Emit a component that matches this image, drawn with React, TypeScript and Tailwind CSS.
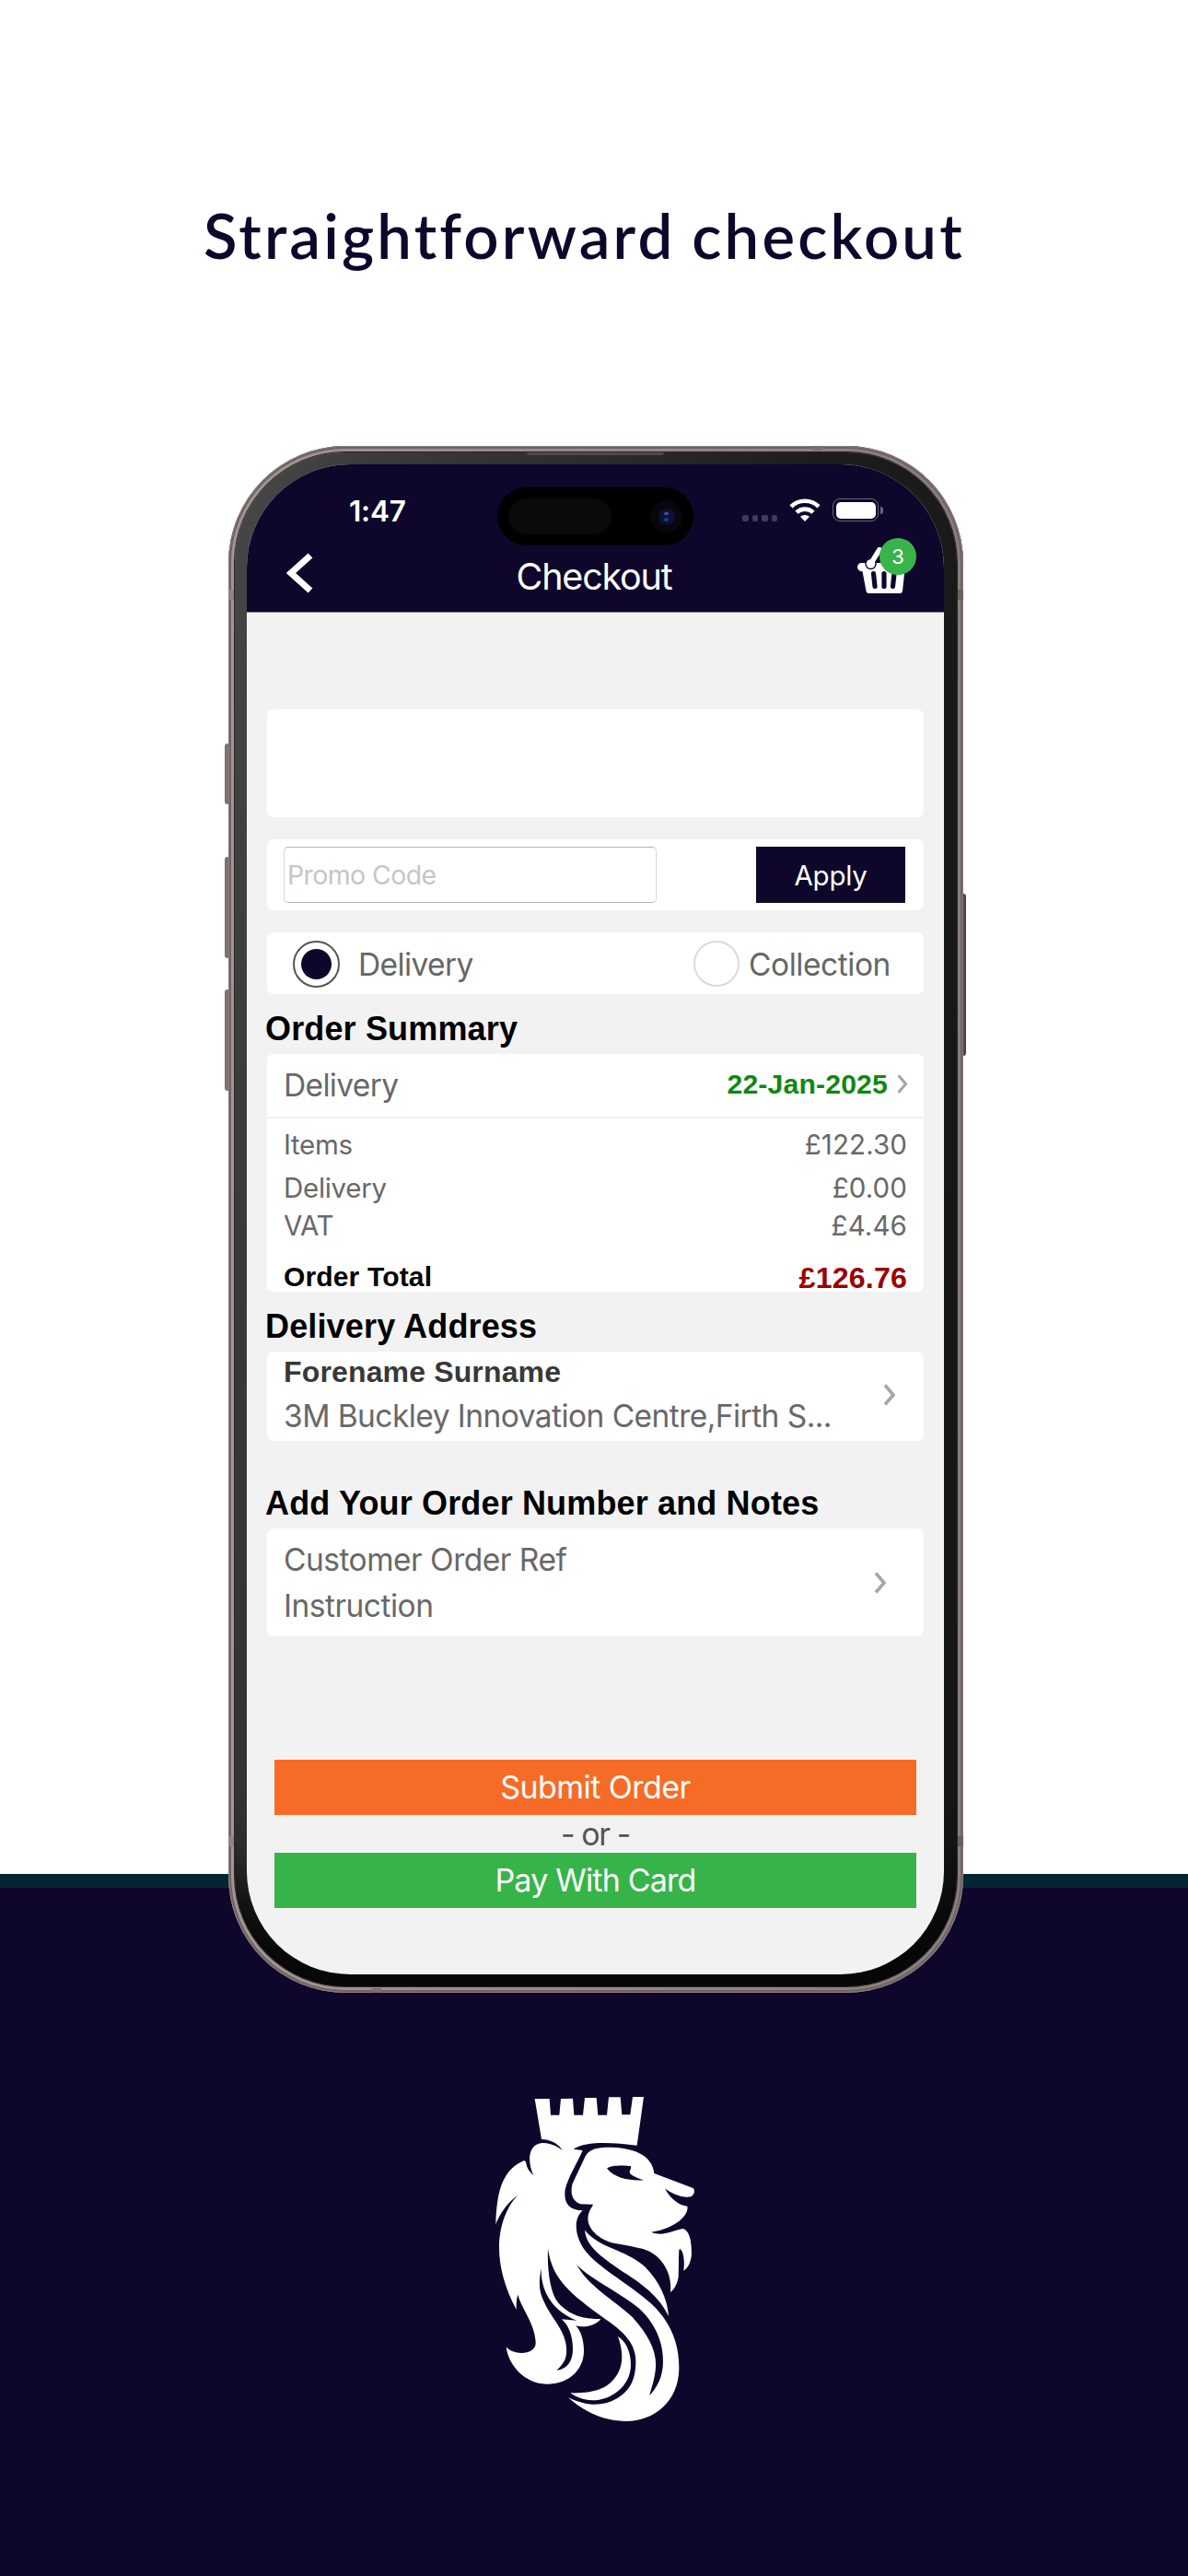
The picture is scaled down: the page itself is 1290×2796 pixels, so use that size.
import React from "react";

const inter = "font-['Inter',sans-serif]";
const arial = "font-['Liberation_Sans',sans-serif] font-bold tracking-[0.15px]";

const Lion = () => (
  <svg width="250" height="380" viewBox="0 0 750 1140" aria-hidden="true">
    {/* Crown and mane */}
    <path
      fill="#fff"
      d="M182 54L230 54L234 107L262 107L267 54L306 53L310 107L339 107L345 51L383 51L388 107L417 107L423 49L461 49L466 106L493 106L501 48L537 48L515 206C440 197 350 190 308 218L338 222C320 265 290 310 281 350C275 395 295 418 338 418C308 445 312 495 340 540C380 600 480 650 560 720C625 780 652 850 652 930C652 1040 570 1104 480 1104C400 1103 340 1070 291 1027C350 1055 400 1058 450 1030C495 1003 511 965 511 910C511 850 470 810 410 770C300 690 240 645 225 543C222 610 232 685 258 718C300 765 350 772 397 771C385 790 345 802 316 793C332 810 342 840 342 875C342 930 300 983 220 983C150 983 95 920 89 862C110 890 185 890 185 850C185 815 168 780 155 755C142 730 132 710 127 692C122 705 122 720 122 740C84 670 66 600 66 540C66 470 90 405 128 367C95 390 67 430 55 463C58 370 70 290 143 257C150 254 153 256 154 265C156 280 165 293 178 304C160 265 155 205 205 198C230 196 255 208 272 222C262 203 235 186 204 186Z"
    />
    {/* Face and beard */}
    <path
      fill="#fff"
      d="M372 398L330 397C300 385 298 355 305 330L345 245C355 225 370 213 420 212C500 212 565 235 571 297L698 345C705 352 702 368 690 373C665 378 630 365 606 346C620 375 650 402 679 404C685 430 645 475 562 488C600 505 640 480 665 477C690 485 693 530 693 560C690 590 680 605 667 614C672 580 665 545 654 543C650 545 652 580 650 635C645 660 635 675 624 684C632 620 590 550 520 540C490 532 460 528 430 522C380 505 350 470 356 435C360 415 367 410 372 398Z"
    />
    <path
      fill="#fff"
      d="M345 482C400 545 470 540 540 600C590 650 615 710 618 762C590 700 530 655 470 618C410 575 350 540 345 482Z"
    />
    <path
      fill="#fff"
      d="M453 828C480 845 495 880 495 920C495 990 430 1036 370 1036C340 1035 315 1025 298 1012C380 1014 420 995 445 960C475 920 468 870 453 828Z"
    />
    {/* Eye and hair lines */}
    <path
      fill="#0e072b"
      d="M417 280C435 268 480 271 495 273C498 285 485 290 495 300C505 308 525 315 537 319C500 322 440 315 417 280Z"
    />
    <path
      fill="#0e072b"
      d="M318 592C345 630 450 680 520 735C570 780 600 840 600 910C600 960 580 995 556 1020C560 1000 573 970 576 930C580 880 555 825 500 765C440 710 350 660 318 592Z"
    />
    <path
      fill="#0e072b"
      d="M203 605C195 650 195 680 210 710C240 780 290 810 285 885C282 910 268 925 253 938C290 935 306 905 306 870C306 830 295 795 270 772L319 776C250 750 200 690 203 605Z"
    />
  </svg>
);

const Basket = () => (
  <svg width="54" height="51" viewBox="0 0 54 51" fill="none" aria-hidden="true">
    <path
      d="M0 21.500a4.500 4.500 0 0 1 4.500-4.500h43a4.500 4.500 0 0 1 4 7L49 47.500a3 3 0 0 1-3 2.500H12.500a3 3 0 0 1-3-2.500L5.500 26A4.500 4.500 0 0 1 0 21.500Z"
      fill="#fff"
    />
    <path d="M17.500 28.500l1.500 14M29 28.500v14M40 28.500l-1.500 14" stroke="#0e072b" strokeWidth="5.200" strokeLinecap="round" />
    <circle cx="14.500" cy="18" r="6.200" fill="#0e072b" />
    <path d="M14.500 18L24 2.500" stroke="#fff" strokeWidth="5.500" strokeLinecap="round" />
    <circle cx="14.500" cy="18" r="4.800" fill="#fff" />
  </svg>
);

const Wifi = () => (
  <svg width="34" height="25" viewBox="0 0 34 25" aria-hidden="true">
    <path d="M17 25l-5-5.200a7.600 7.600 0 0 1 10 0Z" fill="#fff" />
    <path d="M8 15.200a13 13 0 0 1 18 0M2 8.800a21.500 21.500 0 0 1 30 0" stroke="#fff" strokeWidth="4.600" fill="none" />
  </svg>
);

const Chevron = ({ className = "" }: { className?: string }) => (
  <svg viewBox="0 0 14 24" className={className} fill="none" aria-hidden="true">
    <path d="M2 1.500L11 12L2 22.500" stroke="#a6a6a6" strokeWidth="3.600" />
  </svg>
);

const StatusBar = () => (
  <div className="flex h-[88px] items-start pt-[25px]">
    <div className={`${inter} ml-[111px] mt-[10px] w-[161px] text-[31.500px] leading-[32px] font-semibold tracking-[-0.2px] text-white`}>
      1:47
    </div>
    <div className="flex h-[63px] w-[213px] items-center justify-between rounded-full bg-black pr-[12px] pl-[12px]">
      <div className="h-[39px] w-[112px] rounded-full bg-[#0a0a0a]" />
      <div className="flex h-[35px] w-[35px] items-center justify-center rounded-full bg-[#08060c]">
        <div className="flex h-[18px] w-[18px] flex-col items-center justify-center gap-[3px] rounded-full bg-[#0c1034]">
          <div className="h-[3px] w-[5px] rounded-full bg-[#4a4ca8]" />
          <div className="h-[4px] w-[5px] rounded-full bg-[#10428a]" />
        </div>
      </div>
    </div>
    <div className="mt-[30px] ml-[53px] flex gap-[4px]">
      <span className="h-[7px] w-[6.500px] rounded-[2px] bg-[#413b5a]" />
      <span className="h-[7px] w-[6.500px] rounded-[2px] bg-[#413b5a]" />
      <span className="h-[7px] w-[6.500px] rounded-[2px] bg-[#413b5a]" />
      <span className="h-[7px] w-[6.500px] rounded-[2px] bg-[#413b5a]" />
    </div>
    <div className="mt-[12px] ml-[13px]">
      <Wifi />
    </div>
    <div className="mt-[12px] ml-[13px] flex items-center gap-[2px]">
      <div className="h-[25px] w-[50px] rounded-[8px] border-[1.500px] border-[#6a6580] p-[2.500px]">
        <div className="h-full w-full rounded-[5px] bg-white" />
      </div>
      <div className="h-[8px] w-[3px] rounded-r-full bg-[#6a6580]" />
    </div>
  </div>
);

const Header = () => (
  <header className="h-[161px] border-b border-[#807c92] bg-[#0e072b]">
    <StatusBar />
    <div className="flex h-[72px] items-start justify-between pl-[43px] pr-[30px]">
      <svg width="30" height="44" viewBox="0 0 30 44" fill="none" className="mt-[8px]" aria-hidden="true">
        <path d="M26 3L5 22L26 41" stroke="#fff" strokeWidth="7" />
      </svg>
      <h2 className={`${inter} mt-[12px] ml-[18px] text-[39.500px] leading-[44px] tracking-[-1.2px] text-white`}>
        Checkout
      </h2>
      <div className="relative -mt-[8px] h-[60px] w-[64px] pt-[10px]">
        <Basket />
        <div className={`${inter} absolute top-0 right-0 flex h-[40px] w-[40px] items-center justify-center rounded-full bg-[#38b44a] text-[22px] text-white`}>
          3
        </div>
      </div>
    </div>
  </header>
);

const SummaryRow = ({ label, value, className }: { label: string; value: string; className: string }) => (
  <div className={`${inter} ${className} flex items-center justify-between text-[29.500px] text-[#686868]`}>
    <span className="tracking-[-0.3px]">{label}</span>
    <span className="tracking-[0.1px]">{value}</span>
  </div>
);

const CheckoutBody = () => (
  <div className="flex flex-1 flex-col pl-[22px] pr-[22px] pt-[105px]">
    <div className="h-[117px] rounded-[7px] bg-white" />

    <div className="mt-[24px] flex h-[77px] items-center justify-between rounded-[7px] bg-white pl-[18px] pr-[20px]">
      <div className={`${inter} flex h-[61px] w-[405px] items-center rounded-[5px] border border-x-[#d8d8d8] border-y-[#b4b4b4] pt-[2px] pl-[3px] text-[28.500px] tracking-[-0.6px] text-[#c6c6c6]`}>
        Promo Code
      </div>
      <button className={`${inter} h-[61px] w-[162px] bg-[#0e072b] pt-[1px] text-[29.500px] tracking-[-0.3px] text-white`}>
        Apply
      </button>
    </div>

    <div className={`${inter} mt-[24px] flex h-[67px] items-center rounded-[7px] bg-white pl-[28px] text-[33.500px] tracking-[-0.6px] text-[#666]`}>
      <span className="mt-px flex h-[51px] w-[51px] items-center justify-center rounded-full border-2 border-[#555]">
        <span className="h-[33px] w-[33px] rounded-full bg-[#0e072b]" />
      </span>
      <span className="ml-[20px] w-[364px] pt-[3px]">Delivery</span>
      <span className="mt-px h-[50px] w-[50px] rounded-full border-2 border-[#dcdad2]" />
      <span className="ml-[10px] pt-[3px] tracking-[-0.45px]">Collection</span>
    </div>

    <h3 className={`${arial} -ml-[2px] h-[65px] pt-[18px] text-[36px] leading-[40px] text-black`}>
      Order Summary
    </h3>
    <section className="h-[258px] rounded-[7px] bg-white">
      <div className="flex h-[70px] items-center justify-between border-b-2 border-[#f0f0f0] pl-[18px] pr-[16px]">
        <span className={`${inter} text-[33.500px] tracking-[-0.65px] text-[#686868]`}>Delivery</span>
        <span className={`${arial} -mt-[3px] flex items-center gap-[9px] text-[30.200px] text-[#128712]`}>
          22-Jan-2025
          <Chevron className="h-[21px] w-[14px]" />
        </span>
      </div>
      <div className="pl-[18px] pr-[18px]">
        <SummaryRow label="Items" value="£122.30" className="h-[57px]" />
        <SummaryRow label="Delivery" value="£0.00" className="h-[37px]" />
        <SummaryRow label="VAT" value="£4.46" className="h-[44px]" />
        <div className={`${arial} flex h-[50px] items-end justify-between`}>
          <span className="text-[30px] leading-[32px] text-black">Order Total</span>
          <span className="text-[32.200px] leading-[30px] text-[#9c0000]">£126.76</span>
        </div>
      </div>
    </section>

    <h3 className={`${arial} -ml-[2px] h-[65px] pt-[18px] text-[36px] leading-[40px] text-black`}>
      Delivery Address
    </h3>
    <section className="flex h-[97px] items-center justify-between rounded-[7px] bg-white pl-[18px] pr-[30px]">
      <div className="-mt-[6px]">
        <div className={`${arial} text-[32px] leading-[48px] text-[#383838]`}>Forename Surname</div>
        <div className={`${inter} text-[33.500px] leading-[48px] tracking-[-0.55px] text-[#686868]`}>
          3M Buckley Innovation Centre,Firth S...
        </div>
      </div>
      <Chevron className="-mt-[3px] h-[24px] w-[14px]" />
    </section>

    <h3 className={`${arial} -ml-[2px] h-[95px] pt-[48px] text-[36px] leading-[40px] text-black`}>
      Add Your Order Number and Notes
    </h3>
    <section className="flex h-[117px] items-center justify-between rounded-[7px] bg-white pl-[18px] pr-[40px]">
      <div className={`${inter} text-[33.500px] leading-[50px] tracking-[-0.5px] text-[#686868]`}>
        <div>Customer Order Ref</div>
        <div>Instruction</div>
      </div>
      <Chevron className="h-[24px] w-[14px]" />
    </section>

    <div className={`${inter} mx-[8px] mt-[134px] flex flex-col text-center text-[34px] leading-[60px]`}>
      <button className="h-[60px] bg-[#f66c26] tracking-[-0.55px] text-white">Submit Order</button>
      <div className="h-[41px] leading-[41px] tracking-[-1.4px] text-[#555]">- or -</div>
      <button className="h-[60px] bg-[#36b44a] tracking-[-0.8px] text-white">Pay With Card</button>
    </div>
  </div>
);

const Phone = () => (
  <div className="relative ml-[248px] h-[1679px] w-[798px]">
    {/* Side buttons */}
    <div className="absolute top-[323px] -left-[4px] h-[66px] w-[6px] rounded-[3px] bg-[#7d7171]" />
    <div className="absolute top-[446px] -left-[4px] h-[110px] w-[6px] rounded-[3px] bg-[#7d7171]" />
    <div className="absolute top-[590px] -left-[4px] h-[110px] w-[6px] rounded-[3px] bg-[#7d7171]" />
    <div className="absolute top-[486px] -right-[3px] h-[176px] w-[6px] rounded-[3px] bg-[#4c4344]" />

    <div className="relative h-full rounded-[127px] bg-[linear-gradient(90deg,#a39594,#8a7e7d)] p-[7px] shadow-[inset_0_0_0_1px_#8b7f7e,inset_0_0_0_3px_#6e6363]">
      <div className="h-full rounded-[120px] bg-[linear-gradient(100deg,#484848_0%,#3a3a3a_15%,#1c1c1c_60%,#161616_100%)] py-[13px] pr-[14px] pl-[13px] shadow-[0_0_0_1px_#2b2526,inset_0_-130px_60px_-60px_#080808]">
        <div className="flex h-full flex-col overflow-hidden rounded-[112px] bg-[#f2f2f2]">
          <Header />
          <CheckoutBody />
        </div>
      </div>
    </div>

    {/* Speaker slot and antenna bands */}
    <div className="absolute top-[7px] left-[324px] h-[3px] w-[149px] rounded-b-[3px] bg-[#4b4d4b]" />
    <div className="absolute top-[156px] left-0 h-[11px] w-[6px] bg-[#8f8383]" />
    <div className="absolute top-[156px] right-0 h-[11px] w-[6px] bg-[#6b5f5f]" />
    <div className="absolute right-0 bottom-[159px] h-[11px] w-[6px] bg-[#6b5f5f]" />
    <div className="absolute bottom-[159px] left-0 h-[11px] w-[6px] bg-[#8f8383]" />
    <div className="absolute top-0 left-[635px] h-[5px] w-[10px] bg-[#7b6f6f]" />
    <div className="absolute bottom-0 left-[156px] h-[5px] w-[10px] bg-[#7b6f6f]" />
  </div>
);

const App = () => {
  return (
    <div className="flex h-[2796px] w-[1290px] flex-col overflow-hidden bg-[linear-gradient(180deg,#fff_2034px,#042534_2034px,#042534_2049px,#0e072b_2049px)]">
      <h1 className="h-[484px] pt-[215px] pl-[221px] font-['Lato',sans-serif] text-[67px] leading-[80px] font-semibold tracking-[3.200px] [word-spacing:-2px] whitespace-nowrap text-[#0e072b]">
        Straightforward checkout
      </h1>
      <Phone />
      <div className="mt-[97px] ml-[520px]">
        <Lion />
      </div>
    </div>
  );
};

export default App;
